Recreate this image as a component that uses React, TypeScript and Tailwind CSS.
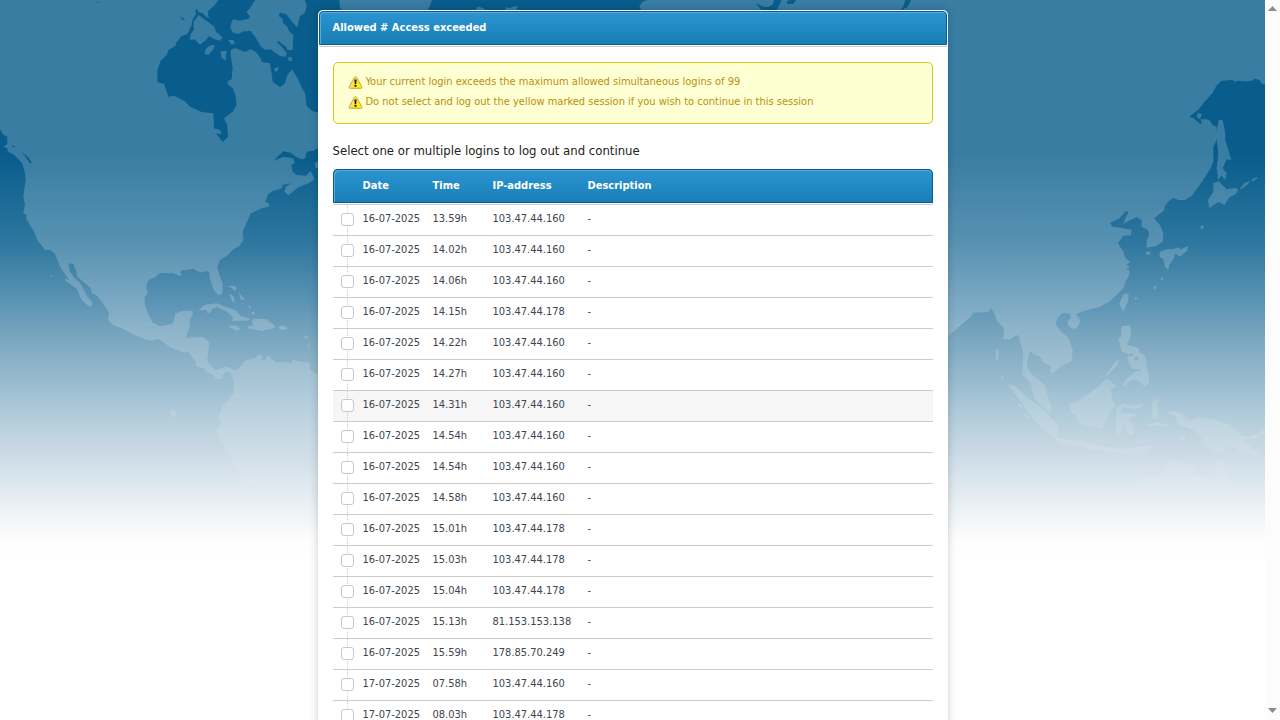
type Session = { date: string; time: string; ip: string; marked?: boolean };

const sessions: Session[] = [
  { date: '16-07-2025', time: '13.59h', ip: '103.47.44.160' },
  { date: '16-07-2025', time: '14.02h', ip: '103.47.44.160' },
  { date: '16-07-2025', time: '14.06h', ip: '103.47.44.160' },
  { date: '16-07-2025', time: '14.15h', ip: '103.47.44.178' },
  { date: '16-07-2025', time: '14.22h', ip: '103.47.44.160' },
  { date: '16-07-2025', time: '14.27h', ip: '103.47.44.160' },
  { date: '16-07-2025', time: '14.31h', ip: '103.47.44.160', marked: true },
  { date: '16-07-2025', time: '14.54h', ip: '103.47.44.160' },
  { date: '16-07-2025', time: '14.54h', ip: '103.47.44.160' },
  { date: '16-07-2025', time: '14.58h', ip: '103.47.44.160' },
  { date: '16-07-2025', time: '15.01h', ip: '103.47.44.178' },
  { date: '16-07-2025', time: '15.03h', ip: '103.47.44.178' },
  { date: '16-07-2025', time: '15.04h', ip: '103.47.44.178' },
  { date: '16-07-2025', time: '15.13h', ip: '81.153.153.138' },
  { date: '16-07-2025', time: '15.59h', ip: '178.85.70.249' },
  { date: '17-07-2025', time: '07.58h', ip: '103.47.44.160' },
  { date: '17-07-2025', time: '08.03h', ip: '103.47.44.178' },
];

const warnings = [
  'Your current login exceeds the maximum allowed simultaneous logins of 99',
  'Do not select and log out the yellow marked session if you wish to continue in this session',
];

/* Land is white in the mask, water is black. Coordinates are three units to the pixel. */
function WorldMap() {
  return (
    <svg
      className="absolute inset-x-0 top-0 h-[560px] w-full"
      viewBox="0 0 1265 560"
      preserveAspectRatio="xMidYMin slice"
      aria-hidden="true"
    >
      <defs>
        <linearGradient id="sea" x1="0" y1="0" x2="0" y2="560" gradientUnits="userSpaceOnUse">
          <stop offset="0" stopColor="#085d8c" />
          <stop offset="0.275" stopColor="#085d8c" />
          <stop offset="0.429" stopColor="#2d769f" />
          <stop offset="0.464" stopColor="#3b7fa4" />
          <stop offset="0.555" stopColor="#6298b8" />
          <stop offset="0.607" stopColor="#7ba8c0" />
          <stop offset="0.67" stopColor="#94b8cc" />
          <stop offset="0.714" stopColor="#a6c4d6" />
          <stop offset="0.76" stopColor="#b8d0dc" />
          <stop offset="0.804" stopColor="#c9d9e4" />
          <stop offset="0.857" stopColor="#dae6ee" />
          <stop offset="0.911" stopColor="#edf2f5" />
          <stop offset="0.964" stopColor="#fdfdfd" />
          <stop offset="1" stopColor="#ffffff" />
        </linearGradient>
        <linearGradient id="haze" x1="0" y1="0" x2="0" y2="560" gradientUnits="userSpaceOnUse">
          <stop offset="0.58" stopColor="#fff" stopOpacity="0.2" />
          <stop offset="0.68" stopColor="#fff" stopOpacity="0.16" />
          <stop offset="0.78" stopColor="#fff" stopOpacity="0.12" />
          <stop offset="0.86" stopColor="#fff" stopOpacity="0.06" />
          <stop offset="0.91" stopColor="#fff" stopOpacity="0" />
        </linearGradient>
        <mask id="land" maskUnits="userSpaceOnUse" x="0" y="0" width="1265" height="560">
          <g transform="scale(0.333333)">
            {/* North and South America */}
            <path
              fill="#fff"
              d="M0 0H960V440L940 452L925 454L917 462L918 473L905 478L888 470L872 458L850 454L820 483L850 470L880 475L884 488L874 495L878 515L890 525L918 527L932 513L944 538L925 550L895 562L865 586L853 574L858 560L872 550L846 555L848 562L838 568L820 572L805 582L796 605L808 611L806 620L785 625L752 640L742 664L728 695L730 720L718 738L700 748L685 764L660 780L652 800L658 825L668 850L668 875L662 884L655 886L640 868L628 830L628 815L615 814L600 818L580 806L562 810L545 810L541 822L548 824L540 828L520 820L480 818L466 832L450 837L440 850L440 868L443 880L434 890L434 912L446 945L458 968L480 979L515 973L522 962L526 940L550 932L575 932L579 940L570 960L568 985L556 1013L610 1011L628 1027L622 1080L632 1097L648 1110L680 1100L708 1112L726 1095L735 1083L765 1073L780 1063L788 1070L783 1080L795 1080L805 1065L812 1075L830 1088L860 1086L874 1090L878 1080L905 1085L928 1088L930 1110L960 1125V1560L850 1540L800 1500L770 1465L738 1450L712 1410L685 1355L652 1305L652 1285L665 1270L656 1255L665 1220L685 1200L700 1180L702 1150L690 1118L680 1115L668 1125L668 1135L645 1138L640 1125L618 1115L612 1105L590 1100L588 1085L566 1057L550 1057L515 1045L475 1016L450 1022L410 1008L365 985L340 975L324 960L327 938L310 912L292 888L275 878L272 865L255 850L232 830L228 812L220 792L205 790L210 815L225 835L240 848L262 890L276 905L278 915L268 920L248 903L240 890L232 868L196 842L194 835L208 842L195 822L180 800L165 762L150 750L135 750L112 720L102 695L78 655L80 645L70 640L75 615L70 590L77 540L75 520L67 490L40 463L24 455L22 445L10 440L22 432L22 410L10 405L0 388Z"
            />
            {/* Atlantic seen past Labrador and Greenland */}
            <path
              fill="#000"
              d="M915 0L920 18L914 40L900 48L892 82L885 75L874 62L858 42L840 38L836 48L848 56L848 68L862 80L868 95L880 104L878 150L862 150L858 140L835 123L830 126L845 140L860 158L858 170L840 168L812 148L795 150L782 138L768 115L752 92L740 94L730 94L715 102L700 98L691 85L694 68L700 58L720 62L745 56L750 50L740 36L752 22L765 0H655L645 14L625 32L624 46L628 54L618 50L606 38L598 38L590 27L586 30L588 42L578 58L575 75L562 102L545 108L530 125L526 138L505 150L500 165L482 182L472 210L472 246L492 252L498 268L505 290L522 287L555 304L570 320L605 336L640 340L642 385L660 390L664 403L648 400L668 426L684 410L682 375L672 355L698 335L710 315L707 290L700 266L683 252V244L695 237L698 205L692 165L692 150L705 144L735 156L752 148L768 156L785 180L784 186L810 190L815 222L818 245L840 262L855 250L862 225L876 208L890 230L905 262L915 280L920 318L938 334L960 338V0Z"
            />
            <path fill="#000" d="M60 450L72 462L84 470L96 488L90 490L76 470ZM36 438H45V441H36ZM290 5L298 7L292 9ZM540 50L552 56L554 62L545 58Z" />
            {/* Arctic islands */}
            <path
              fill="#fff"
              d="M596 45L612 58L628 68L643 80L648 96L668 112L660 122L640 116L628 108L618 120L600 134L584 118L570 120L572 102L581 90V65ZM618 145L632 136H645L640 148L625 165L614 162ZM662 154L680 152L676 182L664 172ZM684 120H700L705 130L695 134ZM822 206L834 200L836 210L826 216ZM862 172L876 172L876 182L868 184ZM944 488L954 485V505L946 503Z"
            />
            {/* Greenland's southern coast and Iceland */}
            <path fill="#fff" d="M1018 0H1296L1290 18L1272 50H1035L1020 22ZM1428 30L1432 20L1450 24L1455 32ZM1515 22L1530 24L1540 20L1555 18L1545 35H1520Z" />
            {/* Caribbean */}
            <path
              fill="#fff"
              d="M596 931L612 915L650 910L680 922L706 930L722 948L752 956L742 962H696L700 952L680 935L650 922L635 928L634 936L622 940L620 930ZM755 960L765 956L800 958L828 980L820 985L785 993L742 984L746 978L760 976ZM686 980L705 976L722 986L710 992ZM838 978L850 976L864 984L852 990L838 988ZM682 858L700 857L708 860L710 870L702 872L696 864ZM688 880L702 890L704 908L696 904ZM716 876L736 900L722 898ZM744 915L754 920L750 928ZM752 938L764 934L762 946ZM912 1008L924 1010L918 1018ZM920 1032L930 1036L926 1040ZM150 824L158 827L154 831ZM510 1232L520 1228L534 1240L520 1250L510 1244Z"
            />
            {/* Eurasia */}
            <path
              fill="#fff"
              d="M2118 0L2142 0H3795V252L3786 252L3778 240L3764 236L3755 242L3740 244L3715 242L3705 246L3698 240L3665 242L3650 256L3637 280L3615 304L3596 328L3568 350L3580 355L3600 371L3606 370L3602 358L3620 358L3630 362L3638 376L3650 381L3650 420L3640 440V485L3632 505L3606 545L3575 588L3555 600L3535 600L3520 594L3510 600L3494 618L3492 632L3462 655L3480 676L3490 700L3488 725L3468 738L3440 743V720L3448 705L3444 690L3425 680V660L3410 652L3390 660L3370 672L3376 655L3386 635L3378 633L3358 655L3330 668L3336 680L3360 683L3396 690L3392 706L3370 707L3354 730L3370 755L3376 775L3391 785L3380 795L3390 803L3378 808L3388 810L3388 825L3378 842L3370 865L3350 885L3330 904L3300 920L3260 930L3235 940L3220 948L3216 960L3208 940H3185L3170 958L3168 976L3180 990L3205 1015L3218 1050L3216 1082L3180 1102L3158 1120L3150 1115L3152 1098L3128 1085L3118 1068L3100 1064L3092 1052L3085 1070L3080 1098L3092 1120L3110 1135L3135 1155L3140 1180L3155 1220L3152 1238L3130 1222L3105 1200L3092 1150L3066 1122L3070 1060L3056 1010L3050 1005L3030 1018L3010 1018L3012 985L2992 965L2985 945L2974 924L2965 936L2920 938L2915 948L2880 978L2840 1012V100H2400L2418 50H2118Z"
            />
            <path fill="#fff" d="M1938 50L1918 20L1926 6L1942 0H2290L2304 20L2300 34L2270 50Z" />
            <path fill="#000" d="M2268 10L2290 20L2304 22L2318 14L2322 0H2345L2330 30L2310 32H2285ZM2360 4L2370 0H2388L2380 12H2362ZM2715 0H2733L2722 22L2712 26L2705 32H2702L2712 14ZM3574 345L3592 345L3600 350L3592 358Z" />
            {/* Sakhalin, Japan and Taiwan */}
            <path
              fill="#fff"
              d="M3656 360L3668 360L3676 400L3676 420L3694 480L3680 478L3668 505L3680 520L3676 540L3664 526L3655 540L3650 505L3655 460L3648 405ZM3594 338L3606 342L3600 358L3590 350ZM3640 550L3656 544L3680 568L3705 564L3715 568L3708 582L3688 592L3674 615L3655 606L3628 624L3624 600L3640 575ZM3720 565L3735 548L3752 542L3740 556L3724 568ZM3754 540L3770 530L3772 534L3758 545ZM3600 682L3606 676L3612 680L3606 688ZM3480 755L3505 747H3522L3535 742L3542 748L3565 738L3562 752L3540 770L3525 760L3522 775L3508 795L3505 810L3495 800L3490 778L3478 770ZM3438 755L3452 755L3450 764H3440ZM3482 832L3490 834L3484 842ZM3462 860L3470 856L3466 868L3460 868ZM3370 882L3386 880L3384 905L3370 935L3358 912ZM3404 890L3414 895L3406 900ZM3202 965L3225 940L3242 962L3230 985L3216 986L3204 975ZM2989 1050L2996 1047L2994 1082L2987 1078ZM3002 1132L3012 1128L3008 1140Z"
            />
            {/* Philippines */}
            <path
              fill="#fff"
              d="M3364 978L3390 976L3394 1000L3388 1018L3380 1034L3415 1044L3420 1058L3436 1066L3440 1098L3448 1130L3446 1150L3434 1160L3420 1145L3400 1138L3382 1148L3378 1160L3366 1158L3382 1135L3400 1120L3408 1112L3394 1104L3382 1080L3384 1062L3366 1055L3355 1018L3364 1008ZM3318 1124L3348 1082L3356 1078L3354 1092L3325 1124Z"
            />
            <path fill="#000" d="M3385 1062L3396 1058L3400 1066L3388 1070ZM3402 1074L3414 1070L3416 1080L3402 1082ZM3400 1106L3424 1108L3420 1114L3404 1112Z" />
            {/* Indonesia and New Guinea */}
            <path
              fill="#fff"
              d="M3024 1154L3045 1158L3080 1190L3110 1212L3135 1232L3155 1255L3175 1275L3172 1312L3190 1318L3240 1320L3270 1330L3300 1338L3360 1346L3400 1344L3450 1336L3455 1346L3420 1365L3405 1378L3400 1365L3350 1356L3290 1352L3250 1342L3180 1330L3160 1312L3130 1290L3090 1245L3060 1200ZM3208 1210L3230 1206L3270 1178L3300 1155L3320 1135L3350 1158L3332 1168L3336 1190L3345 1218L3330 1238L3310 1275L3308 1288L3285 1282L3240 1272L3225 1245L3212 1240ZM3350 1225L3370 1212L3405 1218L3428 1208L3428 1218L3410 1228L3370 1222L3360 1238L3380 1242L3408 1240L3405 1248L3385 1252L3400 1285L3402 1302L3390 1308L3376 1285L3368 1270L3362 1308L3350 1305L3346 1270ZM3456 1205L3478 1195L3472 1215L3476 1235L3465 1260L3456 1248ZM3440 1275L3470 1266L3505 1274L3500 1280L3465 1276L3445 1282ZM3500 1236L3520 1232L3545 1240L3560 1255L3575 1262L3600 1250L3640 1258L3690 1275L3720 1300L3735 1325L3780 1362L3772 1368L3730 1360L3700 1340L3680 1340L3672 1358L3640 1355L3600 1335L3605 1315L3580 1290L3550 1280L3530 1268L3528 1250ZM3715 1308L3750 1310L3775 1300L3795 1285V1300L3765 1318H3730ZM3030 1192L3042 1196L3038 1202ZM3052 1210L3065 1215L3068 1224L3056 1222ZM3072 1242L3086 1248V1260L3074 1252ZM3376 1150H3384L3374 1158ZM3535 1310L3555 1305V1320L3540 1320Z"
            />
            {/* Northern Australia */}
            <path
              fill="#fff"
              d="M3390 1500L3430 1430L3490 1420L3495 1400L3515 1380L3585 1395L3580 1420L3640 1445L3655 1380L3670 1385L3672 1410L3690 1430L3710 1500L3720 1560H3380Z"
            />
          </g>
        </mask>
      </defs>
      <rect width="1265" height="560" fill="url(#sea)" />
      <rect width="1265" height="560" fill="url(#haze)" mask="url(#land)" />
    </svg>
  );
}

function WarningIcon() {
  return (
    <svg className="mt-[3px] size-[15px] shrink-0" viewBox="0 0 15 15" aria-hidden="true">
      <defs>
        <linearGradient id="warn" x1="0" y1="0" x2="1" y2="0.5">
          <stop offset="0" stopColor="#fdf3b0" />
          <stop offset="0.55" stopColor="#f8e24a" />
          <stop offset="1" stopColor="#fff200" />
        </linearGradient>
      </defs>
      <path
        d="M7.5 1.6Q8.2 1.6 8.7 2.5L13.8 11.8Q14.3 13.3 12.8 13.3H2.2Q0.7 13.3 1.2 11.8L6.3 2.5Q6.8 1.6 7.5 1.6Z"
        fill="url(#warn)"
        stroke="#c9a23c"
      />
      <path d="M6.4 4.6H8.6L8.2 9.2H6.8ZM6.5 10H8.5V11.8H6.5Z" fill="#1c1a10" />
    </svg>
  );
}

const headCell =
  'h-[34px] border-y border-[#085d8c] p-0 align-middle text-left font-bold shadow-[inset_0_1px_#5aaad8,0_1px_#fff,0_2px_#ccc]';

export default function App() {
  return (
    <div className="flex h-screen bg-white font-['DejaVu_Sans_Condensed','DejaVu_Sans',sans-serif] text-[11px] leading-5 text-[#3c4650]">
      <div className="relative min-w-0 flex-1 overflow-hidden">
        <WorldMap />
        <main className="relative mx-auto mt-[10px] max-w-[630px] rounded-t-[5px] bg-white p-px shadow-[0_0_8px_rgba(0,0,0,0.2)]">
          <h1 className="flex h-[34px] items-center rounded-t-[4px] border border-[#085d8c] bg-linear-to-b from-[#2b95d2] to-[#187eb5] px-[13px] font-bold text-white shadow-[inset_1px_1px_#5aaad8,0_1px_#fff,0_2px_#ccc]">
            Allowed # Access exceeded
          </h1>
          <div className="px-[14px] pt-[17px]">
            <div
              role="alert"
              className="rounded-[5px] border border-[#dcc814] bg-[#ffffd4] px-[14px] pt-[9px] pb-[11px] text-[#b8900c]"
            >
              {warnings.map((text) => (
                <p key={text} className="flex items-start gap-[3px]">
                  <WarningIcon />
                  {text}
                </p>
              ))}
            </div>
            <h2 className="mt-[17px] text-[13px] text-[#222]">Select one or multiple logins to log out and continue</h2>
            <form className="mt-2">
              <table className="w-full table-fixed border-separate border-spacing-0">
                <thead>
                  <tr className="bg-linear-to-b from-[#2b95d2] to-[#187eb5] text-white">
                    <td className="h-[34px] w-[30px] rounded-tl-[5px] border-y border-l border-[#085d8c] p-0 shadow-[inset_1px_1px_#5aaad8,0_1px_#fff,0_2px_#ccc]" />
                    <th scope="col" className={`${headCell} w-[70px]`}>Date</th>
                    <th scope="col" className={`${headCell} w-[60px]`}>Time</th>
                    <th scope="col" className={`${headCell} w-[95px]`}>IP-address</th>
                    <th scope="col" className={`${headCell} rounded-tr-[5px] border-r`}>Description</th>
                  </tr>
                </thead>
                <tbody className="[&_td]:border-b [&_td]:border-[#ccc] [&_td]:p-0 [&_td]:pb-[3px] [&_td]:align-middle">
                  <tr aria-hidden="true" className="h-[2px]" />
                  {sessions.map((s, i) => (
                    <tr key={i} className={s.marked ? 'h-[31px] bg-[#f6f6f6]' : 'h-[31px]'}>
                      <td className="bg-[linear-gradient(#ccc_1px,transparent_1px)] bg-[length:1px_2px] bg-[position:14px_0] bg-repeat-y">
                        <input
                          type="checkbox"
                          aria-label={`Log out session of ${s.date} ${s.time}`}
                          className="mt-[2px] ml-2 block size-[13px] appearance-none rounded-[3px] border border-[#c8c8c8] bg-white checked:bg-[#187eb5]"
                        />
                      </td>
                      <td>{s.date}</td>
                      <td>{s.time}</td>
                      <td>{s.ip}</td>
                      <td>-</td>
                    </tr>
                  ))}
                </tbody>
              </table>
            </form>
          </div>
        </main>
      </div>
      <div aria-hidden="true" className="flex w-[15px] flex-col items-center justify-between bg-[#fcfcfc] pt-[6px] pb-[7px]">
        <svg className="h-[5px] w-[9px]" viewBox="0 0 9 5">
          <path d="M4.5 0L9 5H0Z" fill="#8b8b8b" />
        </svg>
        <svg className="h-[5px] w-[9px]" viewBox="0 0 9 5">
          <path d="M4.5 5L9 0H0Z" fill="#8b8b8b" />
        </svg>
      </div>
    </div>
  );
}
